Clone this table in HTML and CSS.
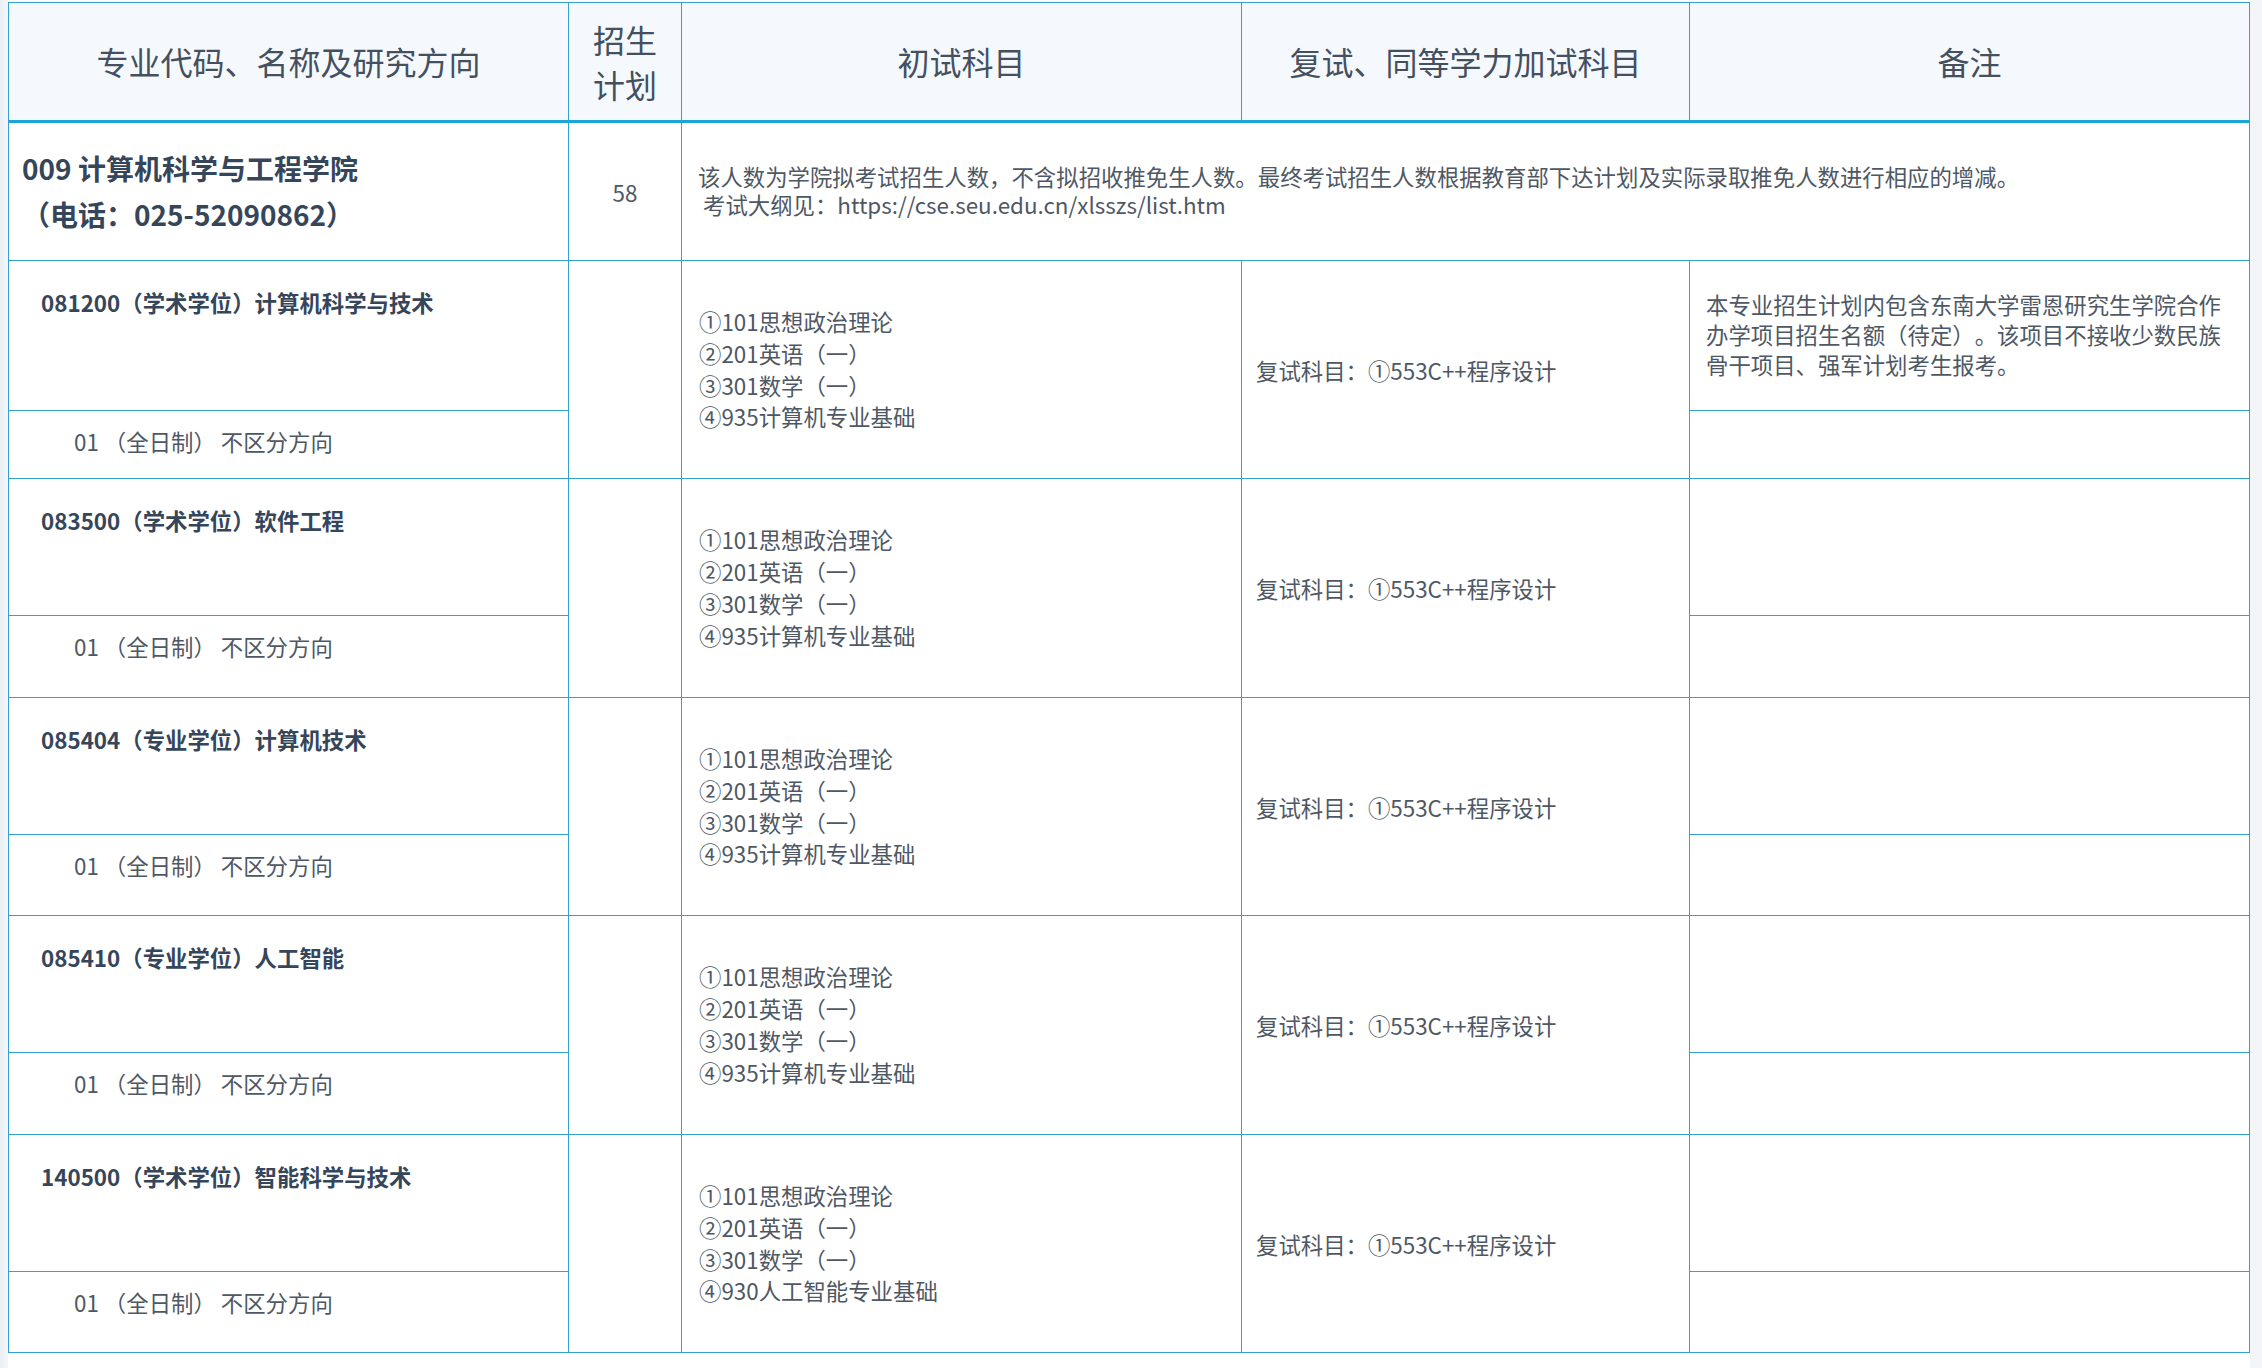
FILE: index.html
```html
<!DOCTYPE html>
<html lang="zh-CN">
<head>
<meta charset="utf-8">
<title>招生专业目录</title>
<link rel="stylesheet" href="styles.css">
</head>
<body>
<div class="sheet">
  <div class="cell head">专业代码、名称及研究方向</div>
  <div class="cell head">招生<br>计划</div>
  <div class="cell head">初试科目</div>
  <div class="cell head">复试、同等学力加试科目</div>
  <div class="cell head">备注</div>

  <div class="cell college">009 计算机科学与工程学院<br>（电话：025-52090862）</div>
  <div class="cell plan">58</div>
  <div class="cell college-note">该人数为学院拟考试招生人数，不含拟招收推免生人数。最终考试招生人数根据教育部下达计划及实际录取推免人数进行相应的增减。<br>&nbsp;考试大纲见：https://cse.seu.edu.cn/xlsszs/list.htm</div>

  <div class="cell major">081200（学术学位）计算机科学与技术</div>
  <div class="cell span2"></div>
  <div class="cell span2 subjects"><p>①101思想政治理论</p><p>②201英语（一）</p><p>③301数学（一）</p><p>④935计算机专业基础</p></div>
  <div class="cell span2 retest">复试科目：①553C++程序设计</div>
  <div class="cell remark">本专业招生计划内包含东南大学雷恩研究生学院合作办学项目招生名额（待定）。该项目不接收少数民族骨干项目、强军计划考生报考。</div>
  <div class="cell direction">01 （全日制） 不区分方向</div>
  <div class="cell"></div>

  <div class="cell major">083500（学术学位）软件工程</div>
  <div class="cell span2"></div>
  <div class="cell span2 subjects"><p>①101思想政治理论</p><p>②201英语（一）</p><p>③301数学（一）</p><p>④935计算机专业基础</p></div>
  <div class="cell span2 retest">复试科目：①553C++程序设计</div>
  <div class="cell remark"></div>
  <div class="cell direction">01 （全日制） 不区分方向</div>
  <div class="cell"></div>

  <div class="cell major">085404（专业学位）计算机技术</div>
  <div class="cell span2"></div>
  <div class="cell span2 subjects"><p>①101思想政治理论</p><p>②201英语（一）</p><p>③301数学（一）</p><p>④935计算机专业基础</p></div>
  <div class="cell span2 retest">复试科目：①553C++程序设计</div>
  <div class="cell remark"></div>
  <div class="cell direction">01 （全日制） 不区分方向</div>
  <div class="cell"></div>

  <div class="cell major">085410（专业学位）人工智能</div>
  <div class="cell span2"></div>
  <div class="cell span2 subjects"><p>①101思想政治理论</p><p>②201英语（一）</p><p>③301数学（一）</p><p>④935计算机专业基础</p></div>
  <div class="cell span2 retest">复试科目：①553C++程序设计</div>
  <div class="cell remark"></div>
  <div class="cell direction">01 （全日制） 不区分方向</div>
  <div class="cell"></div>

  <div class="cell major">140500（学术学位）智能科学与技术</div>
  <div class="cell span2"></div>
  <div class="cell span2 subjects"><p>①101思想政治理论</p><p>②201英语（一）</p><p>③301数学（一）</p><p>④930人工智能专业基础</p></div>
  <div class="cell span2 retest">复试科目：①553C++程序设计</div>
  <div class="cell remark"></div>
  <div class="cell direction">01 （全日制） 不区分方向</div>
  <div class="cell"></div>
</div>
</body>
</html>
```

FILE: styles.css
```css
html {
  background: linear-gradient(to right, #e9eff4 0, #f4f7fa 8px, #ffffff 8px, #ffffff 2250px, #f3f5f8 2250px);
  min-height: 100%;
}
body {
  margin: 0;
  padding: 2px 0 0 8px;
  font-family: "Noto Sans CJK SC", "Noto Sans", sans-serif;
  color: #4e5864;
  font-size: 22.4px;
  text-spacing-trim: space-all;
}
.sheet {
  display: grid;
  width: 2242px;
  box-sizing: border-box;
  grid-template-columns: 560px 113px 560px 448px 560px;
  grid-template-rows: 120px 138px 150px 68px 137px 82px 137px 81px 137px 82px 137px 81px;
  border-left: 1px solid #35a2cd;
  border-top: 1px solid #35a2cd;
  background: #fff;
}
.cell {
  box-sizing: border-box;
  border-right: 1px solid #35a2cd;
  border-bottom: 1px solid #35a2cd;
  display: flex;
  align-items: center;
  min-width: 0;
}
.head {
  background: #f5f9fe;
  border-bottom: 3px solid #1ba6d9;
  justify-content: center;
  text-align: center;
  font-size: 32px;
  line-height: 45px;
  color: #44505e;
}
.college {
  font-size: 28px;
  line-height: 46px;
  font-weight: 700;
  color: #36465a;
  padding-left: 13px;
  padding-bottom: 2px;
}
.plan {
  justify-content: center;
  font-size: 22.4px;
}
.college-note {
  grid-column: span 3;
  padding-left: 16px;
  padding-bottom: 4px;
  line-height: 28px;
}
.span2 {
  grid-row: span 2;
}
.major {
  align-items: flex-start;
  padding: 25px 0 0 32px;
  font-weight: 700;
  line-height: 32px;
  color: #36465a;
}
.direction {
  align-items: flex-start;
  padding: 14px 0 0 65px;
  line-height: 32px;
  white-space: pre;
}
.subjects {
  flex-direction: column;
  align-items: flex-start;
  justify-content: center;
  padding: 0 0 0 17px;
}
.subjects p {
  margin: 0;
  line-height: 31.8px;
}
.retest {
  padding: 0 0 0 14px;
  word-spacing: 0;
}
.remark {
  align-items: flex-start;
  padding: 28px 16px 0 16px;
  line-height: 30px;
}
```
